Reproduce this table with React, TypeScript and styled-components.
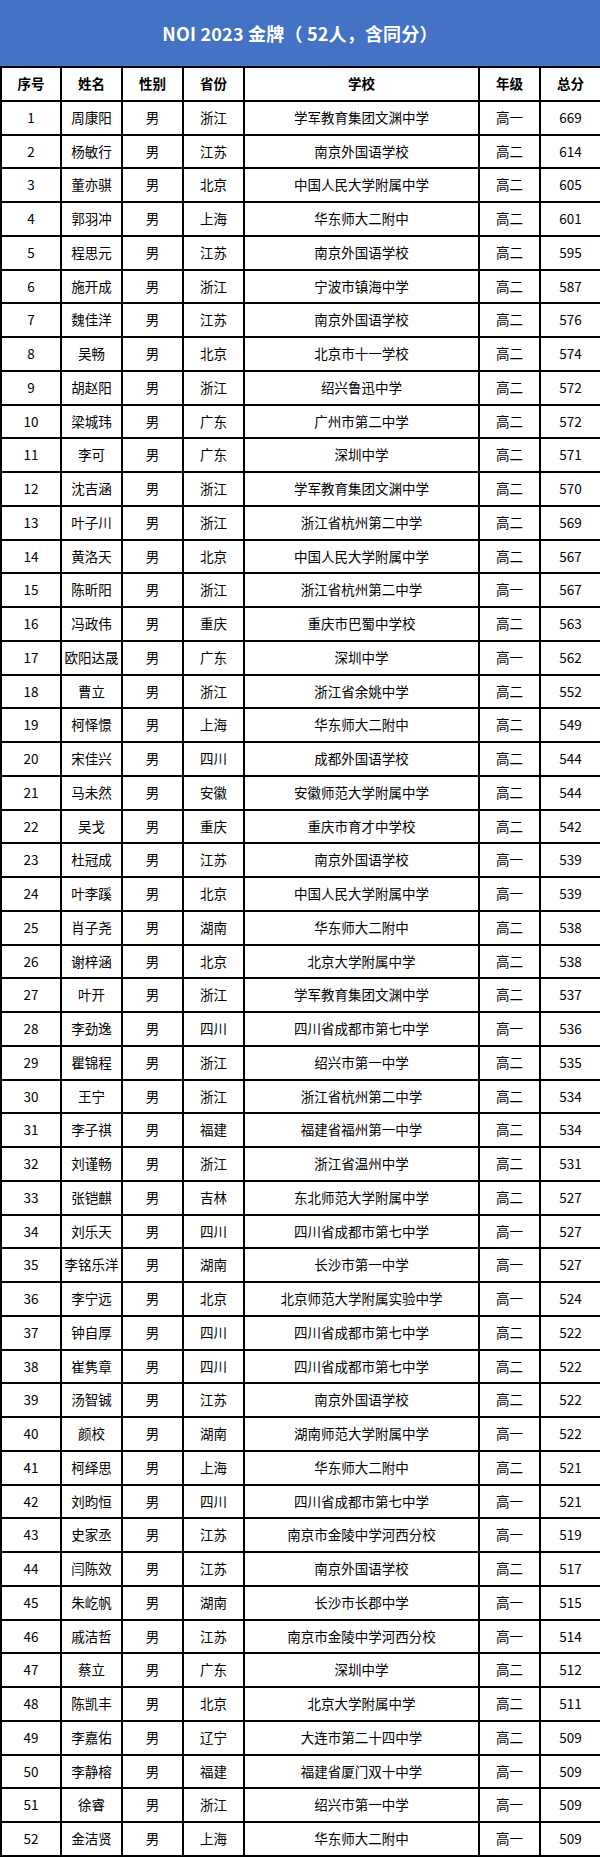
import React from 'react';
import styled, { createGlobalStyle } from 'styled-components';

const GlobalStyle = createGlobalStyle`
  html, body {
    margin: 0;
    padding: 0;
    background: #ffffff;
  }
  body {
    font-family: 'Noto Sans CJK SC', 'Noto Sans', sans-serif;
  }
`;

const Page = styled.div`
  width: 600px;
  background: #fff;
`;

const Title = styled.div`
  height: 66px;
  display: flex;
  align-items: center;
  justify-content: center;
  background: #4472c4;
  color: #fff;
  font-size: 18px;
  font-weight: 700;
  letter-spacing: 0.2px;
`;

const Table = styled.table`
  width: 600px;
  border-collapse: collapse;
  table-layout: fixed;
  color: #000;
  font-size: 13.5px;
`;

const Row = styled.tr`
  height: 33.75px;
`;

const Cell = styled.td<{ $head?: boolean }>`
  border: 2px solid #000;
  padding: 0;
  text-align: center;
  vertical-align: middle;
  white-space: nowrap;
  overflow: hidden;
  font-weight: ${p => (p.$head ? 700 : 400)};
  line-height: 1;
`;

const cols = [60, 61, 61, 61, 235, 61, 61];
const heads = ['序号', '姓名', '性别', '省份', '学校', '年级', '总分'];

// 姓名, 省份, 学校, 年级, 总分
const rows: [string, string, string, string, number][] = [
  ['周康阳', '浙江', '学军教育集团文渊中学', '高一', 669],
  ['杨敏行', '江苏', '南京外国语学校', '高二', 614],
  ['董亦骐', '北京', '中国人民大学附属中学', '高二', 605],
  ['郭羽冲', '上海', '华东师大二附中', '高二', 601],
  ['程思元', '江苏', '南京外国语学校', '高二', 595],
  ['施开成', '浙江', '宁波市镇海中学', '高二', 587],
  ['魏佳洋', '江苏', '南京外国语学校', '高二', 576],
  ['吴畅', '北京', '北京市十一学校', '高二', 574],
  ['胡赵阳', '浙江', '绍兴鲁迅中学', '高二', 572],
  ['梁城玮', '广东', '广州市第二中学', '高二', 572],
  ['李可', '广东', '深圳中学', '高二', 571],
  ['沈吉涵', '浙江', '学军教育集团文渊中学', '高二', 570],
  ['叶子川', '浙江', '浙江省杭州第二中学', '高二', 569],
  ['黄洛天', '北京', '中国人民大学附属中学', '高二', 567],
  ['陈昕阳', '浙江', '浙江省杭州第二中学', '高一', 567],
  ['冯政伟', '重庆', '重庆市巴蜀中学校', '高二', 563],
  ['欧阳达晟', '广东', '深圳中学', '高一', 562],
  ['曹立', '浙江', '浙江省余姚中学', '高二', 552],
  ['柯怿憬', '上海', '华东师大二附中', '高二', 549],
  ['宋佳兴', '四川', '成都外国语学校', '高二', 544],
  ['马未然', '安徽', '安徽师范大学附属中学', '高二', 544],
  ['吴戈', '重庆', '重庆市育才中学校', '高二', 542],
  ['杜冠成', '江苏', '南京外国语学校', '高一', 539],
  ['叶李蹊', '北京', '中国人民大学附属中学', '高一', 539],
  ['肖子尧', '湖南', '华东师大二附中', '高二', 538],
  ['谢梓涵', '北京', '北京大学附属中学', '高二', 538],
  ['叶开', '浙江', '学军教育集团文渊中学', '高二', 537],
  ['李劲逸', '四川', '四川省成都市第七中学', '高一', 536],
  ['瞿锦程', '浙江', '绍兴市第一中学', '高二', 535],
  ['王宁', '浙江', '浙江省杭州第二中学', '高二', 534],
  ['李子祺', '福建', '福建省福州第一中学', '高二', 534],
  ['刘谨畅', '浙江', '浙江省温州中学', '高二', 531],
  ['张铠麒', '吉林', '东北师范大学附属中学', '高二', 527],
  ['刘乐天', '四川', '四川省成都市第七中学', '高一', 527],
  ['李铭乐洋', '湖南', '长沙市第一中学', '高一', 527],
  ['李宁远', '北京', '北京师范大学附属实验中学', '高一', 524],
  ['钟自厚', '四川', '四川省成都市第七中学', '高二', 522],
  ['崔隽章', '四川', '四川省成都市第七中学', '高二', 522],
  ['汤智铖', '江苏', '南京外国语学校', '高二', 522],
  ['颜校', '湖南', '湖南师范大学附属中学', '高一', 522],
  ['柯绎思', '上海', '华东师大二附中', '高二', 521],
  ['刘昀恒', '四川', '四川省成都市第七中学', '高一', 521],
  ['史家丞', '江苏', '南京市金陵中学河西分校', '高一', 519],
  ['闫陈效', '江苏', '南京外国语学校', '高二', 517],
  ['朱屹帆', '湖南', '长沙市长郡中学', '高一', 515],
  ['戚洁哲', '江苏', '南京市金陵中学河西分校', '高一', 514],
  ['蔡立', '广东', '深圳中学', '高二', 512],
  ['陈凯丰', '北京', '北京大学附属中学', '高二', 511],
  ['李嘉佑', '辽宁', '大连市第二十四中学', '高二', 509],
  ['李静榕', '福建', '福建省厦门双十中学', '高一', 509],
  ['徐睿', '浙江', '绍兴市第一中学', '高一', 509],
  ['金洁贤', '上海', '华东师大二附中', '高一', 509],
];

export default function App() {
  return (
    <Page>
      <GlobalStyle />
      <Title>NOI 2023 金牌（ 52人，含同分）</Title>
      <Table>
        <colgroup>
          {cols.map((w, i) => (
            <col key={i} style={{ width: w }} />
          ))}
        </colgroup>
        <thead>
          <Row>
            {heads.map(h => (
              <Cell as="th" $head key={h}>
                {h}
              </Cell>
            ))}
          </Row>
        </thead>
        <tbody>
          {rows.map(([name, prov, school, grade, score], i) => (
            <Row key={i}>
              <Cell>{i + 1}</Cell>
              <Cell>{name}</Cell>
              <Cell>男</Cell>
              <Cell>{prov}</Cell>
              <Cell>{school}</Cell>
              <Cell>{grade}</Cell>
              <Cell>{score}</Cell>
            </Row>
          ))}
        </tbody>
      </Table>
    </Page>
  );
}
